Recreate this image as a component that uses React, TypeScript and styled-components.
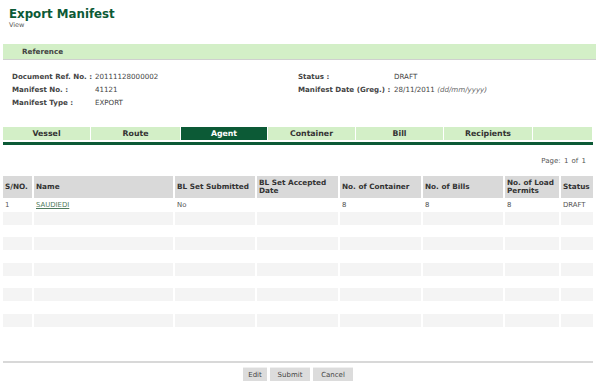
import React from 'react';
import styled, { createGlobalStyle } from 'styled-components';

const GlobalStyle = createGlobalStyle`
    body {
        margin: 0;
        background: #ffffff;
        font-family: "DejaVu Sans", Verdana, sans-serif;
        color: #333333;
    }
`;

const GREEN = '#0c5a36';
const LIGHT_GREEN = '#d3efc7';

const Page = styled.div`
    width: 596px;
    height: 384px;
    overflow: hidden;
    display: flex;
    flex-direction: column;
`;

const Header = styled.div`
    padding: 6px 9px 0;
    height: 44px;
    box-sizing: border-box;
`;

const Title = styled.h1`
    margin: 0;
    font-size: 11.8px;
    line-height: 16px;
    font-weight: bold;
    color: ${GREEN};
`;

const Subtitle = styled.div`
    font-size: 6.5px;
    line-height: 6px;
    color: #555555;
`;

const SectionBar = styled.div`
    margin-left: 3px;
    height: 15px;
    background: ${LIGHT_GREEN};
    border-bottom: 1px solid #cfcfcf;
    padding-left: 19px;
    display: flex;
    align-items: center;
    font-size: 7.2px;
    font-weight: bold;
    color: #444444;
`;

const Fields = styled.div`
    display: grid;
    grid-template-columns: 286px 1fr;
    padding: 10px 0 0 12px;
    height: 67px;
    box-sizing: border-box;
`;

const FieldColumn = styled.div`
    display: flex;
    flex-direction: column;
`;

const FieldRow = styled.div<{ labelWidth: number }>`
    display: grid;
    grid-template-columns: ${props => props.labelWidth}px 1fr;
    height: 13px;
    align-items: center;
    font-size: 7.1px;
`;

const Label = styled.span`
    font-weight: bold;
    color: #444444;
    white-space: nowrap;
`;

const Value = styled.span`
    color: #444444;
    white-space: nowrap;
    em {
        font-style: italic;
        color: #666666;
    }
`;

const Tabs = styled.div`
    margin: 0 3px;
    display: grid;
    grid-template-columns: 88px 90px 87px 88px 88px 89px 1fr;
    height: 15px;
    border-bottom: 3px solid ${GREEN};
`;

const Tab = styled.div<{ active?: boolean }>`
    background: ${props => props.active ? GREEN : LIGHT_GREEN};
    color: ${props => props.active ? '#ffffff' : '#333333'};
    border-right: 1px solid #ffffff;
    margin-bottom: 2px;
    display: flex;
    align-items: center;
    justify-content: center;
    font-size: 7.8px;
    font-weight: bold;
`;

const Pager = styled.div`
    text-align: right;
    padding: 12px 10px 0 0;
    height: 31px;
    box-sizing: border-box;
    font-size: 7px;
    color: #555555;
    word-spacing: 1px;
`;

const Grid = styled.table`
    width: 592px;
    border-collapse: separate;
    border-spacing: 2px 0;
    margin-left: 1px;
    table-layout: fixed;
    font-size: 6.9px;
    color: #444444;
`;

const HeadCell = styled.th`
    background: #d9d9d9;
    height: 22px;
    padding: 0 1px 0 2px;
    text-align: left;
    font-size: 7.3px;
    font-weight: bold;
    line-height: 8px;
    color: #333333;
    border-bottom: 1px solid #ffffff;
`;

const Row = styled.tr<{ shaded: boolean }>`
    height: 12.75px;
    td {
        background: ${props => props.shaded ? '#f4f4f4' : '#ffffff'};
        padding: 0 2px;
        color: #555555;
    }
`;

const NameLink = styled.a`
    color: #4f7a5d;
    text-decoration: underline;
`;

const Footer = styled.div`
    margin-top: auto;
    margin-left: 3px;
    margin-right: 3px;
    border-top: 2px solid #d8d8d8;
    padding: 4px 0 3px;
    display: flex;
    justify-content: center;
    gap: 3px;
`;

const Button = styled.button<{ width: number }>`
    width: ${props => props.width}px;
    height: 14px;
    padding: 0;
    border: none;
    border-top: 1px solid #f0f0f0;
    background: #dcdcdc;
    font-family: "DejaVu Sans", Verdana, sans-serif;
    font-size: 7px;
    color: #444444;
`;

const columns = [
    { title: 'S/NO.', width: 29 },
    { title: 'Name', width: 139 },
    { title: 'BL Set Submitted', width: 80 },
    { title: 'BL Set Accepted Date', width: 81 },
    { title: 'No. of Container', width: 81 },
    { title: 'No. of Bills', width: 80 },
    { title: 'No. of Load Permits', width: 54 },
    { title: 'Status', width: 32 },
];

const tabs = ['Vessel', 'Route', 'Agent', 'Container', 'Bill', 'Recipients', ''];

export default function App() {
    const emptyRows = Array.from({ length: 10 });

    return (
        <Page>
            <GlobalStyle />
            <Header>
                <Title>Export Manifest</Title>
                <Subtitle>View</Subtitle>
            </Header>
            <SectionBar>Reference</SectionBar>
            <Fields>
                <FieldColumn>
                    <FieldRow labelWidth={83}><Label>Document Ref. No. :</Label><Value>20111128000002</Value></FieldRow>
                    <FieldRow labelWidth={83}><Label>Manifest No. :</Label><Value>41121</Value></FieldRow>
                    <FieldRow labelWidth={83}><Label>Manifest Type :</Label><Value>EXPORT</Value></FieldRow>
                </FieldColumn>
                <FieldColumn>
                    <FieldRow labelWidth={96}><Label>Status :</Label><Value>DRAFT</Value></FieldRow>
                    <FieldRow labelWidth={96}><Label>Manifest Date (Greg.) :</Label><Value>28/11/2011 <em>(dd/mm/yyyy)</em></Value></FieldRow>
                </FieldColumn>
            </Fields>
            <Tabs>
                {tabs.map((t, i) => <Tab key={i} active={t === 'Agent'}>{t}</Tab>)}
            </Tabs>
            <Pager>Page: 1 of 1</Pager>
            <Grid>
                <colgroup>
                    {columns.map(c => <col key={c.title} style={{ width: c.width }} />)}
                </colgroup>
                <thead>
                    <tr>{columns.map(c => <HeadCell key={c.title}>{c.title}</HeadCell>)}</tr>
                </thead>
                <tbody>
                    <Row shaded={false}>
                        <td>1</td>
                        <td><NameLink href="#">SAUDIEDI</NameLink></td>
                        <td>No</td>
                        <td></td>
                        <td>8</td>
                        <td>8</td>
                        <td>8</td>
                        <td>DRAFT</td>
                    </Row>
                    {emptyRows.map((_, i) => (
                        <Row key={i} shaded={i % 2 === 0}>
                            {columns.map(c => <td key={c.title}></td>)}
                        </Row>
                    ))}
                </tbody>
            </Grid>
            <Footer>
                <Button width={24}>Edit</Button>
                <Button width={40}>Submit</Button>
                <Button width={40}>Cancel</Button>
            </Footer>
        </Page>
    );
}
